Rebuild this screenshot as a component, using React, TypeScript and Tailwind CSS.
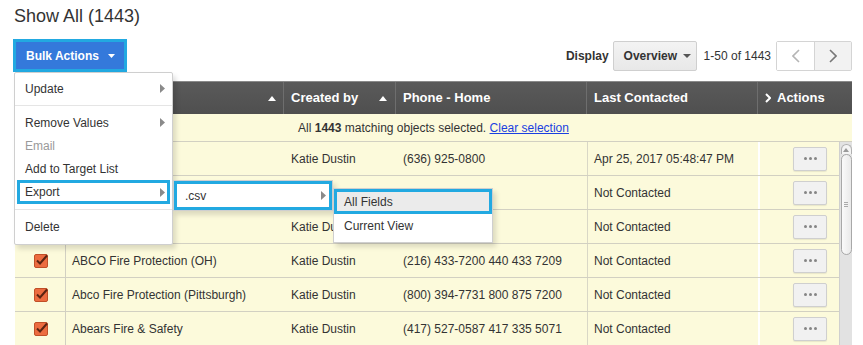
import React from "react";

type Row = { name: string; by: string; phone: string; last: string };

// the first rows sit under the open menus; only what shows is filled in
const rows: Row[] = [
  { name: "", by: "Katie Dustin", phone: "(636) 925-0800", last: "Apr 25, 2017 05:48:47 PM" },
  { name: "", by: "", phone: "", last: "Not Contacted" },
  { name: "", by: "Katie Dustin", phone: "", last: "Not Contacted" },
  { name: "ABCO Fire Protection (OH)", by: "Katie Dustin", phone: "(216) 433-7200 440 433 7209", last: "Not Contacted" },
  { name: "Abco Fire Protection (Pittsburgh)", by: "Katie Dustin", phone: "(800) 394-7731 800 875 7200", last: "Not Contacted" },
  { name: "Abears Fire & Safety", by: "Katie Dustin", phone: "(417) 527-0587 417 335 5071", last: "Not Contacted" },
];

function RightArrow() {
  return (
    <svg width="5" height="9" viewBox="0 0 5 9" className="shrink-0">
      <path d="M0 0 L5 4.5 L0 9 Z" fill="#8a8a8a" />
    </svg>
  );
}

function SortUp() {
  return (
    <svg width="8" height="5" viewBox="0 0 8 5" className="shrink-0">
      <path d="M0 5 L4 0 L8 5 Z" fill="#fff" />
    </svg>
  );
}

function Checkbox() {
  return (
    <svg width="15" height="15" viewBox="0 0 15 15">
      <rect x="0.5" y="1.5" width="13" height="13" rx="1.5" fill="#ec6c40" stroke="#c04f28" />
      <path d="M3 7.5 L6 10.5 L13 2.5" fill="none" stroke="#5b2412" strokeWidth="2" />
    </svg>
  );
}

function DotsButton() {
  return (
    <div className="flex h-[24px] w-[34px] items-center justify-center gap-[2px] rounded-[2px] border border-[#cfcfcf] bg-[#f1f1f1] shadow-[0_1px_1px_rgba(0,0,0,0.08)]">
      <span className="h-[3px] w-[3px] rounded-full bg-[#858585]" />
      <span className="h-[3px] w-[3px] rounded-full bg-[#858585]" />
      <span className="h-[3px] w-[3px] rounded-full bg-[#858585]" />
    </div>
  );
}

function MenuItem({ label, arrow, muted }: { label: string; arrow?: boolean; muted?: boolean }) {
  return (
    <div className={`flex h-[23px] items-center justify-between pl-[10px] pr-[7px] ${muted ? "text-[#9a9a9a]" : "text-[#333]"}`}>
      <span>{label}</span>
      {arrow ? <RightArrow /> : null}
    </div>
  );
}

function Divider() {
  return <div className="my-[5px] h-px bg-[#e5e5e5]" />;
}

function BulkMenu() {
  return (
    <div className="absolute left-[1px] top-full z-20 w-[159px] rounded-[2px] border border-[#cfcfcf] bg-white pb-[6px] pt-[4px] text-[12px] shadow-[3px_4px_5px_rgba(0,0,0,0.13)]">
      <MenuItem label="Update" arrow />
      <Divider />
      <MenuItem label="Remove Values" arrow />
      <MenuItem label="Email" muted />
      <MenuItem label="Add to Target List" />
      <div className="mx-[2px] flex h-[24px] items-center justify-between border-[3px] border-[#22a9e1] pl-[5px] pr-[2px] text-[#333]">
        <span>Export</span>
        <RightArrow />
      </div>
      <Divider />
      <MenuItem label="Delete" />

      <div className="absolute left-[158px] top-[107px] w-[160px] border border-[#cfcfcf] bg-white shadow-[3px_4px_5px_rgba(0,0,0,0.13)]">
        <div className="flex h-[29px] items-center justify-between border-[3px] border-[#22a9e1] pl-[8px] pr-[3px] text-[#333]">
          <span>.csv</span>
          <RightArrow />
        </div>

        <div className="absolute left-[159px] top-[7px] w-[160px] border border-[#cfcfcf] bg-white pb-[4px] shadow-[3px_4px_5px_rgba(0,0,0,0.13)]">
          <div className="flex h-[25px] items-center border-[3px] border-[#22a9e1] bg-[#ebebeb] pl-[7px] text-[#333]">All Fields</div>
          <div className="flex h-[24px] items-center pl-[10px] text-[#333]">Current View</div>
        </div>
      </div>
    </div>
  );
}

function Scrollbar() {
  return (
    <div className="flex w-[13px] flex-col items-center border-l border-[#cfcfcf] bg-[#e2e2e2] pt-[2px]">
      <div className="flex h-[10px] w-[11px] items-start justify-center rounded-t-full border border-b-0 border-[#b0b0b0] bg-[#f4f4f4] pt-[3px]">
        <svg width="6" height="4" viewBox="0 0 6 4">
          <path d="M0 4 L3 0 L6 4 Z" fill="#9a9a9a" />
        </svg>
      </div>
      <div className="flex h-[101px] w-[11px] flex-col items-center justify-center gap-[1px] rounded-full border border-[#a8a8a8] bg-gradient-to-r from-[#fafafa] to-[#e9e9e9]">
        <span className="h-px w-[4px] bg-[#aaa]" />
        <span className="h-px w-[4px] bg-[#aaa]" />
        <span className="h-px w-[4px] bg-[#aaa]" />
      </div>
    </div>
  );
}

export default function App() {
  return (
    <div className="relative h-[345px] w-[863px] overflow-hidden bg-white font-['Liberation_Sans',Arial,sans-serif] text-[#333]">
      <div className="pl-[14px] pt-[4px] text-[18px] leading-[24px] text-[#333]">Show All (1443)</div>

      <div className="mt-[11px] flex h-[33px] items-center justify-between pl-[13px] pr-[11px]">
        <div className="relative">
          <div className="border-[3px] border-[#22a9e1]">
            <div className="flex h-[27px] w-[108px] items-center gap-[9px] bg-[#3479db] pl-[10px] text-[12px] font-bold text-white">
              <span>Bulk Actions</span>
              <svg width="7" height="4" viewBox="0 0 7 4">
                <path d="M0 0 L7 0 L3.5 4 Z" fill="#fff" />
              </svg>
            </div>
          </div>
          <BulkMenu />
        </div>

        <div className="flex items-center text-[12px]">
          <span className="mr-[4px] font-bold text-[#333]">Display</span>
          <div className="flex h-[30px] w-[84px] items-center gap-[6px] rounded-[2px] border border-[#cfcfcf] bg-gradient-to-b from-[#f3f3f3] to-[#e8e8e8] pl-[10px] font-bold text-[#333]">
            <span>Overview</span>
            <svg width="8" height="4" viewBox="0 0 8 4">
              <path d="M0 0 L8 0 L4 4 Z" fill="#555" />
            </svg>
          </div>
          <span className="ml-[7px] mr-[5px] text-[#333]">1-50 of 1443</span>
          <div className="flex h-[30px] rounded-[2px] border border-[#d4d4d4]">
            <div className="flex w-[37px] items-center justify-center bg-white">
              <svg width="8" height="14" viewBox="0 0 8 14">
                <path d="M7 1 L1 7 L7 13" fill="none" stroke="#b5b5b5" strokeWidth="1.6" />
              </svg>
            </div>
            <div className="flex w-[37px] items-center justify-center border-l border-[#d4d4d4] bg-[#f2f2f2]">
              <svg width="8" height="14" viewBox="0 0 8 14">
                <path d="M1 1 L7 7 L1 13" fill="none" stroke="#777" strokeWidth="1.6" />
              </svg>
            </div>
          </div>
        </div>
      </div>

      <div className="ml-[15px] mr-[11px] mt-[9px] text-[12px]">
        <div className="grid h-[33px] grid-cols-[51px_218px_112px_191px_171px_94px] border-t border-[#8a8a8a] bg-gradient-to-b from-[#5a5a5a] to-[#4f4f4f] text-[13px] font-bold text-white">
          <div className="border-r border-[#6e6e6e]" />
          <div className="flex items-center justify-end border-r border-[#6e6e6e] pr-[7px]">
            <SortUp />
          </div>
          <div className="flex items-center justify-between border-r border-[#6e6e6e] pl-[7px] pr-[8px]">
            <span>Created by</span>
            <SortUp />
          </div>
          <div className="flex items-center border-r border-[#6e6e6e] pl-[7px]">Phone - Home</div>
          <div className="flex items-center border-r border-[#6e6e6e] pl-[7px]">Last Contacted</div>
          <div className="flex items-center gap-[6px] pl-[7px]">
            <svg width="6" height="10" viewBox="0 0 6 10">
              <path d="M1 1 L5 5 L1 9" fill="none" stroke="#fff" strokeWidth="2" />
            </svg>
            <span>Actions</span>
          </div>
        </div>

        <div className="flex h-[28px] items-center justify-center border-b border-[#d2d0c2] bg-[#fcfadb] text-[#333]">
          <span>
            All <b>1443</b> matching objects selected.{" "}
            <span className="text-[#1a3fe0] underline">Clear selection</span>
          </span>
        </div>

        <div className="flex bg-[#fcfadb]">
          <div className="w-[824px]">
            {rows.map((r, i) => (
              <div key={i} className="grid h-[34px] grid-cols-[51px_218px_112px_191px_171px_81px] border-b border-[#d2d0c2]">
                <div className="flex items-center justify-center border-r border-[#d2d0c2] pl-[3px]">
                  <Checkbox />
                </div>
                <div className="flex items-center pl-[6px]">{r.name}</div>
                <div className="flex items-center pl-[7px]">{r.by}</div>
                <div className="flex items-center pl-[7px]">{r.phone}</div>
                <div className="flex items-center border-l border-[#d9d7c6] pl-[6px]">{r.last}</div>
                <div className="flex items-center border-l-2 border-white pl-[33px]">
                  <DotsButton />
                </div>
              </div>
            ))}
          </div>
          <Scrollbar />
        </div>
      </div>
    </div>
  );
}
